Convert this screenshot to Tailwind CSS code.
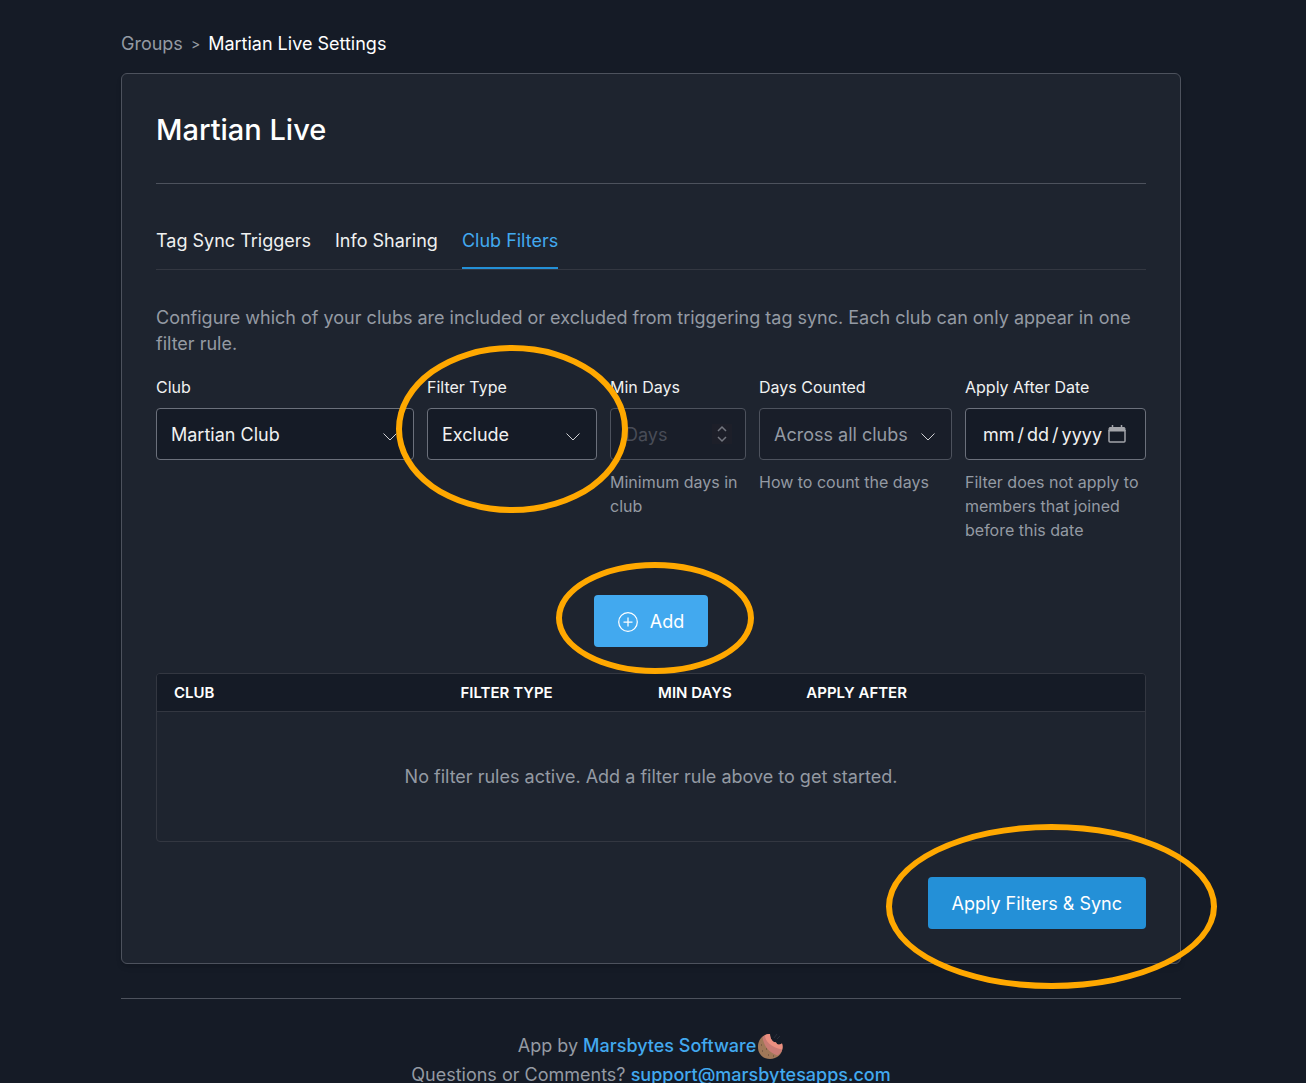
<!DOCTYPE html>
<html lang="en">
<head>
  <meta charset="UTF-8" />
  <meta name="viewport" content="width=device-width, initial-scale=1" />
  <title>Martian Live Settings</title>
  <script src="https://cdn.jsdelivr.net/npm/@tailwindcss/browser@4"></script>
  <style>
    body { font-family: Inter, 'Liberation Sans', sans-serif; }
    input[type=number]::-webkit-inner-spin-button { display: none; }
    input[type=date]::-webkit-calendar-picker-indicator { opacity: 0; margin: 0; width: 20px; }
    input[type=date]::-webkit-datetime-edit-text { padding: 0 2px; }
  </style>
</head>
<body class="bg-[#151b26] text-[#f0f1f1] text-lg pr-1 overflow-x-hidden">
  <div class="w-full max-w-[1060px] mx-auto pt-[30px]">

    <nav class="flex items-center leading-7" aria-label="Breadcrumb">
      <a href="#" class="text-[#949aa3]">Groups</a>
      <span class="text-[#949aa3] text-sm mx-2">&gt;</span>
      <span class="text-white">Martian Live Settings</span>
    </nav>

    <main class="mt-[15px] bg-[#1e242f] border border-[#4d525d] rounded-md shadow-md p-[34px]">
      <h1 class="text-[29px] leading-11 font-medium text-white">Martian Live</h1>
      <hr class="mt-[31px] border-[#4d525d]" />

      <div class="mt-11 flex gap-6 border-b border-[#333741]">
        <a href="#" class="leading-[26px] pb-[13px] border-b-2 border-transparent">Tag Sync Triggers</a>
        <a href="#" class="leading-[26px] pb-[13px] border-b-2 border-transparent">Info Sharing</a>
        <a href="#" class="leading-[26px] pb-[13px] border-b-2 border-[#2490d7] text-[#42a9ef]">Club Filters</a>
      </div>

      <p class="mt-[35px] leading-[26px] text-[#949aa3]">Configure which of your clubs are included or excluded from triggering tag sync. Each club can only appear in one filter rule.</p>

      <form>
        <div class="mt-[18px] grid grid-cols-[258fr_170fr_136fr_193fr_181fr] gap-[13px] text-base leading-6">
          <div class="min-w-0">
            <label for="club" class="block">Club</label>
            <div class="relative mt-[9px]">
              <select id="club" class="appearance-none w-full h-[52px] pl-[14px] pt-[2px] text-lg bg-[#151b26] border border-[#6b707b] rounded">
                <option>Martian Club</option>
              </select>
              <svg class="absolute right-4 top-[21px] w-4 h-4 pointer-events-none" viewBox="0 0 16 16" fill="none" stroke="#cecfd2"><path d="M1.500 4.500l6.500 6.500 6.500-6.500" /></svg>
            </div>
          </div>

          <div class="relative min-w-0">
            <label for="type" class="block">Filter Type</label>
            <div class="relative mt-[9px]">
              <select id="type" class="appearance-none w-full h-[52px] pl-[14px] pt-[2px] text-lg bg-[#151b26] border border-[#6b707b] rounded">
                <option>Exclude</option>
              </select>
              <svg class="absolute right-4 top-[21px] w-4 h-4 pointer-events-none" viewBox="0 0 16 16" fill="none" stroke="#cecfd2"><path d="M1.500 4.500l6.500 6.500 6.500-6.500" /></svg>
            </div>
            <!-- highlight ring -->
            <span class="absolute z-10 -left-[31px] -top-[30px] w-[232px] h-[168px] rounded-[50%] border-6 border-[#ffa800] pointer-events-none"></span>
          </div>

          <div class="min-w-0">
            <label for="days" class="block">Min Days</label>
            <div class="relative mt-[9px]">
              <input id="days" type="number" placeholder="Days" disabled class="w-full h-[52px] pl-[14px] text-lg bg-[#191e29] border border-[#4d525d] rounded placeholder:text-[#484c57]" />
              <svg class="absolute right-[14px] top-4 w-5 h-5 bg-[#1d1f29] pointer-events-none" viewBox="0 0 20 20" fill="none" stroke="#73767f" stroke-width="1.500"><path d="M6 7l4-4 4 4M6 13l4 4 4-4" /></svg>
            </div>
            <p class="mt-[10px] text-[#949aa3]">Minimum days in club</p>
          </div>

          <div class="min-w-0">
            <label for="counted" class="block">Days Counted</label>
            <div class="relative mt-[9px]">
              <select id="counted" disabled class="appearance-none w-full h-[52px] pl-[14px] pt-[2px] text-lg bg-[#191e29] text-[#949aa3] border border-[#4d525d] rounded opacity-100">
                <option>Across all clubs</option>
              </select>
              <svg class="absolute right-4 top-[21px] w-4 h-4 pointer-events-none" viewBox="0 0 16 16" fill="none" stroke="#cecfd2"><path d="M1.500 4.500l6.500 6.500 6.500-6.500" /></svg>
            </div>
            <p class="mt-[10px] text-[#949aa3]">How to count the days</p>
          </div>

          <div class="min-w-0">
            <label for="after" class="block">Apply After Date</label>
            <div class="relative mt-[9px]">
              <input id="after" type="date" class="w-full h-[52px] pl-4 pr-[14px] pt-[2px] text-lg bg-[#151b26] border border-[#6b707b] rounded" />
              <svg class="absolute right-5 top-[17px] w-[18px] h-[18px] pointer-events-none" viewBox="0 0 18 18" fill="none" stroke="#a3a5aa"><path d="M1 6V3.500a1 1 0 0 1 1-1h14a1 1 0 0 1 1 1V6z" fill="#a3a5aa" /><path d="M1 5v11a1 1 0 0 0 1 1h14a1 1 0 0 0 1-1V5" stroke-width="1.500" /><path d="M4.500 0v3M13.500 0v3" stroke-width="1.500" /></svg>
            </div>
            <p class="mt-[10px] text-[#949aa3]">Filter does not apply to members that joined before this date</p>
          </div>
        </div>

        <div class="mt-[53px] flex justify-center">
          <div class="relative">
            <button type="button" class="flex items-center gap-3 h-[52px] px-6 pt-px bg-[#42a9ef] text-white rounded">
              <svg class="w-5 h-5" viewBox="0 0 20 20" fill="none" stroke="currentColor" stroke-width="1.250"><circle cx="10" cy="10" r="9.300" /><path d="M10 5.500v9M5.500 10h9" /></svg>
              Add
            </button>
            <span class="absolute z-10 -left-[38px] -top-[33px] w-[198px] h-[112px] rounded-[50%] border-6 border-[#ffa800] pointer-events-none"></span>
          </div>
        </div>
      </form>

      <div class="mt-[26px] border border-[#333741] rounded overflow-hidden">
        <table class="w-full table-fixed">
          <thead class="bg-[#151b26] text-[15px] leading-[37px] text-left text-white">
            <tr class="border-b border-[#333741]">
              <th class="w-[29%] pl-[17px] font-semibold">CLUB</th>
              <th class="w-[20%] pl-[17px] font-semibold">FILTER TYPE</th>
              <th class="w-[15%] pl-[17px] font-semibold">MIN DAYS</th>
              <th class="pl-[17px] font-semibold">APPLY AFTER</th>
            </tr>
          </thead>
          <tbody>
            <tr>
              <td colspan="4" class="py-[52px] text-center leading-[25px] text-[#949aa3]">No filter rules active. Add a filter rule above to get started.</td>
            </tr>
          </tbody>
        </table>
      </div>

      <div class="mt-[35px] flex justify-end">
        <div class="relative">
          <button type="button" class="h-[52px] px-6 pt-px bg-[#2490d7] text-white rounded">Apply Filters &amp; Sync</button>
          <span class="absolute z-10 -left-[42px] -top-[53px] w-[331px] h-[165px] rounded-[50%] border-6 border-[#ffa800] pointer-events-none"></span>
        </div>
      </div>
    </main>

    <hr class="mt-[34px] border-[#4d525d]" />

    <footer class="mt-[31px] text-center leading-[29px] text-[#949aa3]">
      <p class="flex justify-center items-center">
        App by&nbsp;<a href="#" class="font-medium text-[#42a9ef]">Marsbytes Software</a>
        <svg class="w-7 h-7 mt-[2px]" viewBox="0 0 28 28">
          <path d="M14 2C7 2 2 7.500 2 15c0 7 5 12 12 12s12.500-5 12.500-11.500c0-2-.200-3-.500-4-3 2-5 1.500-6-1-3 0-6-3-6-8.500z" fill="#a07858" />
          <path d="M14 2c-3 0-5.500 1-7.500 3 1 9 7 16 15 18.500 3.500-2 5-5 5-8 0-2-.200-3-.500-4-3 2-5 1.500-6-1-3 0-6-3-6-8.500z" fill="#c97b74" />
          <path d="M14 2c-2 0-3.500.400-5 1.200 0 6 6 12 17 14.300.700-2 .500-4 0-6-3 2-5 1.500-6-1-3 0-6-3-6-8.500z" fill="#eb8f80" />
          <path d="M5 13h1M6 19h1M10 17h1M12 23h1M17 24h1" stroke="#5d4536" />
          <path d="M18 6l3-4M21 7l3-3" stroke="#2a2f3a" />
        </svg>
      </p>
      <p>Questions or Comments? <a href="mailto:support@marsbytesapps.com" class="font-medium text-[#42a9ef]">support@marsbytesapps.com</a></p>
    </footer>
  </div>
</body>
</html>
